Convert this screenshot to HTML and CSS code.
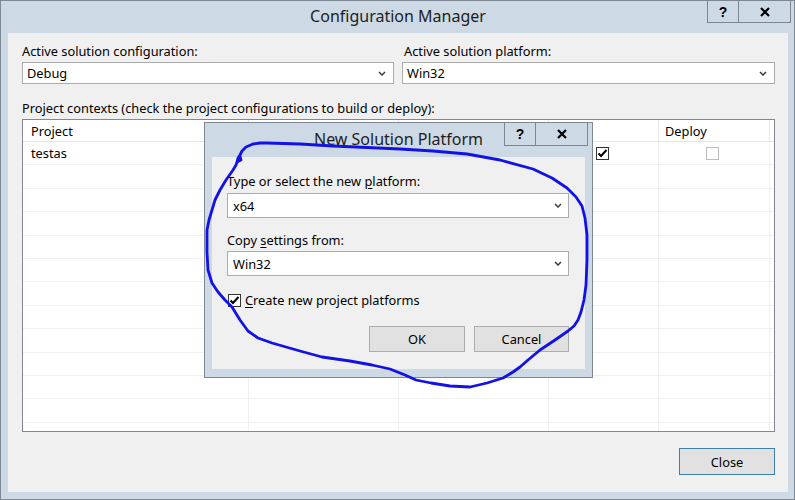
FILE: index.html
```html
<!DOCTYPE html>
<html>
<head>
<meta charset="utf-8">
<title>Configuration Manager</title>
<link rel="stylesheet" href="styles.css">
</head>
<body>
<div class="window">
  <div class="titlebar">
    <div class="title">Configuration Manager</div>
    <div class="caps">
      <div class="cap help">?</div>
      <div class="cap x"><svg width="10" height="10" viewBox="0 0 10 10"><path d="M1 1 L9 9 M9 1 L1 9" stroke="#000" stroke-width="2.2" fill="none"/></svg></div>
    </div>
  </div>
  <div class="client">
    <div class="fields">
      <div class="field">
        <div class="lbl">Active solution configuration:</div>
        <div class="combo"><span>Debug</span><svg class="chev" width="8" height="5" viewBox="0 0 8 5"><path d="M1 1 L4 4 L7 1" stroke="#3c3c3c" stroke-width="1.5" fill="none"/></svg></div>
      </div>
      <div class="field">
        <div class="lbl ind">Active solution platform:</div>
        <div class="combo"><span>Win32</span><svg class="chev" width="8" height="5" viewBox="0 0 8 5"><path d="M1 1 L4 4 L7 1" stroke="#3c3c3c" stroke-width="1.5" fill="none"/></svg></div>
      </div>
    </div>
    <div class="lbl ctx">Project contexts (check the project configurations to build or deploy):</div>
    <div class="grid">
      <div class="row head"><div>Project</div><div></div><div></div><div></div><div>Deploy</div><div></div></div>
      <div class="row"><div>testas</div><div></div><div></div><div class="c"><span class="chk on"><svg width="11" height="11" viewBox="0 0 11 11"><path d="M1.5 5.5 L4 8 L9.5 2" stroke="#000" stroke-width="2" fill="none"/></svg></span></div><div class="c"><span class="chk dis"></span></div><div></div></div>
      <div class="row"><div></div><div></div><div></div><div></div><div></div><div></div></div>
      <div class="row"><div></div><div></div><div></div><div></div><div></div><div></div></div>
      <div class="row"><div></div><div></div><div></div><div></div><div></div><div></div></div>
      <div class="row"><div></div><div></div><div></div><div></div><div></div><div></div></div>
      <div class="row"><div></div><div></div><div></div><div></div><div></div><div></div></div>
      <div class="row"><div></div><div></div><div></div><div></div><div></div><div></div></div>
      <div class="row"><div></div><div></div><div></div><div></div><div></div><div></div></div>
      <div class="row"><div></div><div></div><div></div><div></div><div></div><div></div></div>
      <div class="row"><div></div><div></div><div></div><div></div><div></div><div></div></div>
      <div class="row"><div></div><div></div><div></div><div></div><div></div><div></div></div>
      <div class="row"><div></div><div></div><div></div><div></div><div></div><div></div></div>
      <div class="row"><div></div><div></div><div></div><div></div><div></div><div></div></div>
    </div>
    <div class="footer"><div class="btn default">Close</div></div>
  </div>

  <div class="dlg">
    <div class="titlebar dlg-title">
      <div class="title">New Solution Platform</div>
      <div class="caps">
        <div class="cap help">?</div>
        <div class="cap x"><svg width="10" height="10" viewBox="0 0 10 10"><path d="M1 1 L9 9 M9 1 L1 9" stroke="#000" stroke-width="2.2" fill="none"/></svg></div>
      </div>
    </div>
    <div class="dlg-client">
      <div class="lbl">Type or select the new <u>p</u>latform:</div>
      <div class="combo tall"><span>x64</span><svg class="chev" width="8" height="5" viewBox="0 0 8 5"><path d="M1 1 L4 4 L7 1" stroke="#3c3c3c" stroke-width="1.5" fill="none"/></svg></div>
      <div class="lbl gap14">Copy <u>s</u>ettings from:</div>
      <div class="combo tall"><span>Win32</span><svg class="chev" width="8" height="5" viewBox="0 0 8 5"><path d="M1 1 L4 4 L7 1" stroke="#3c3c3c" stroke-width="1.5" fill="none"/></svg></div>
      <div class="checkrow"><span class="chk on dark"><svg width="11" height="11" viewBox="0 0 11 11"><path d="M1.5 5.5 L4 8 L9.5 2" stroke="#000" stroke-width="2" fill="none"/></svg></span><span><u>C</u>reate new project platforms</span></div>
      <div class="btnrow"><div class="btn ok">OK</div><div class="btn cancel">Cancel</div></div>
    </div>
  </div>
</div>

<svg class="scribble" width="795" height="500" viewBox="0 0 795 500">
  <path d="M240 156 L241 160 L237 162 L238 158 L240 155 L242 151 L246 147 L253 144 L260 143 L267 143 L300 144 L333 146 L367 147.5 L400 149 L433 151 L467 154 L500 160 L533 169 L552 178 L567 188 L576 197 L582 206 L585 218 L587 235 L587 260 L586 285 L584 300 L581 312 L578 320 L574 326 L568 331 L555 340 L540 350 L528 360 L520 367 L513 372 L503 378 L487 383 L470 387 L450 386 L431 383 L416 380 L405 375 L390 369 L372 365 L350 361 L322 357 L300 351 L272 343 L258 338 L248 331 L240 320 L232 307 L225 300 L218 292 L212 283 L208 270 L207 252 L207 230 L209 220 L212 210 L215 200 L220 190 L226 180 L233 170 L236 165 L237 162" fill="none" stroke="#1212e8" stroke-width="2.8" stroke-linejoin="round" stroke-linecap="round"/>
</svg>
</body>
</html>
```

FILE: styles.css
```css
* { box-sizing: border-box; }
html, body { margin: 0; padding: 0; }
body {
  position: relative;
  width: 795px;
  height: 500px;
  overflow: hidden;
  background: #cdd9e4;
  font-family: "Noto Sans", "Open Sans", sans-serif;
  font-size: 12.8px;
  color: #000;
}
.window {
  position: relative;
  width: 795px;
  height: 500px;
  border: 1px solid #7d8894;
  background: #cdd9e4;
  display: flex;
  flex-direction: column;
}
.titlebar {
  height: 32px;
  flex: none;
  display: grid;
  grid-template-columns: 1fr auto 1fr;
  align-items: start;
  padding-right: 3px;
}
.title {
  grid-column: 2;
  font-size: 16px;
  line-height: 31px;
  color: #1e1e1e;
  white-space: nowrap;
  padding-left: 4px;
}
.caps {
  grid-column: 3;
  justify-self: end;
  display: flex;
}
.cap {
  height: 22px;
  border: 1px solid #7b8692;
  border-top: none;
  display: flex;
  align-items: center;
  justify-content: center;
  font-family: "Liberation Sans", sans-serif;
  font-weight: bold;
  font-size: 14px;
}
.cap.help { width: 32px; }
.cap.x { width: 52px; border-left: none; }

.client {
  flex: 1;
  margin: 0 6px 7px 7px;
  background: #f0f0f0;
  padding: 10px 13px 17px 14px;
  display: flex;
  flex-direction: column;
}
.fields {
  display: grid;
  grid-template-columns: 372px 373px;
  column-gap: 8px;
}
.lbl {
  height: 16px;
  line-height: 16px;
  white-space: nowrap;
}
.lbl.ind { padding-left: 2px; }
.lbl u { text-underline-offset: 2px; }
.combo {
  margin-top: 3px;
  height: 22px;
  border: 1px solid #acacac;
  background: #fff;
  display: flex;
  align-items: center;
  justify-content: space-between;
  padding: 0 7px 0 4px;
}
.combo.tall { height: 25px; margin-top: 4px; padding-left: 5px; padding-right: 6px; }
.combo.tall + .lbl { margin-top: 14px; }
.lbl.gap14 + .combo.tall { margin-top: 3px; }
.ctx { margin-top: 16px; }

.grid {
  margin-top: 3px;
  height: 313px;
  flex: none;
  border: 1px solid #828790;
  background: #fff;
  overflow: hidden;
}
.row {
  display: grid;
  grid-template-columns: 226px 150px 150px 110px 111px 1fr;
  height: 23.4px;
  border-bottom: 1px solid #f0f0f0;
}
.row > div {
  border-right: 1px solid #f0f0f0;
  display: flex;
  align-items: center;
  padding-left: 8px;
  white-space: nowrap;
}
.row > div:last-child { border-right: none; }
.row.head { height: 22px; border-bottom: 1px solid #e5e5e5; }
.row.head > div { border-right-color: #e8e8e8; padding-left: 6px; }
.row.head > div:first-child { padding-left: 8px; }
.row > div.c { justify-content: center; padding-left: 0; padding-right: 3px; }
.chk {
  width: 13px;
  height: 13px;
  border: 1px solid #333;
  background: #fff;
  display: inline-flex;
  align-items: center;
  justify-content: center;
  flex: none;
}
.chk.dis { border-color: #bcbcbc; }

.footer {
  margin-top: auto;
  display: flex;
  justify-content: flex-end;
}
.btn {
  height: 27px;
  width: 96px;
  border: 1px solid #adadad;
  background: #e1e1e1;
  display: flex;
  align-items: center;
  justify-content: center;
}
.btn.default { border-color: #3c7fb1; }

.dlg {
  position: absolute;
  left: 203px;
  top: 121px;
  width: 389px;
  height: 256px;
  border: 1px solid #7d8894;
  background: #cdd9e4;
  display: flex;
  flex-direction: column;
}
.dlg-title { height: 34px; padding-right: 4px; }
.dlg-title .title { line-height: 32px; }
.dlg .cap { height: 23px; }
.dlg-client {
  flex: 1;
  margin: 0 7px 8px 7px;
  background: #f0f0f0;
  padding: 16px 16px 17px 15px;
  display: flex;
  flex-direction: column;
}
.checkrow {
  margin-top: 16px;
  height: 16px;
  display: flex;
  align-items: center;
  gap: 4px;
  padding-left: 1px;
  white-space: nowrap;
}
.checkrow u { text-underline-offset: 2px; }
.btnrow {
  margin-top: 18px;
  display: flex;
  justify-content: flex-end;
  gap: 9px;
}
.btnrow .btn { height: 26px; }
.btn.cancel { width: 95px; }

.scribble {
  position: absolute;
  left: 0;
  top: 0;
  pointer-events: none;
}
```
